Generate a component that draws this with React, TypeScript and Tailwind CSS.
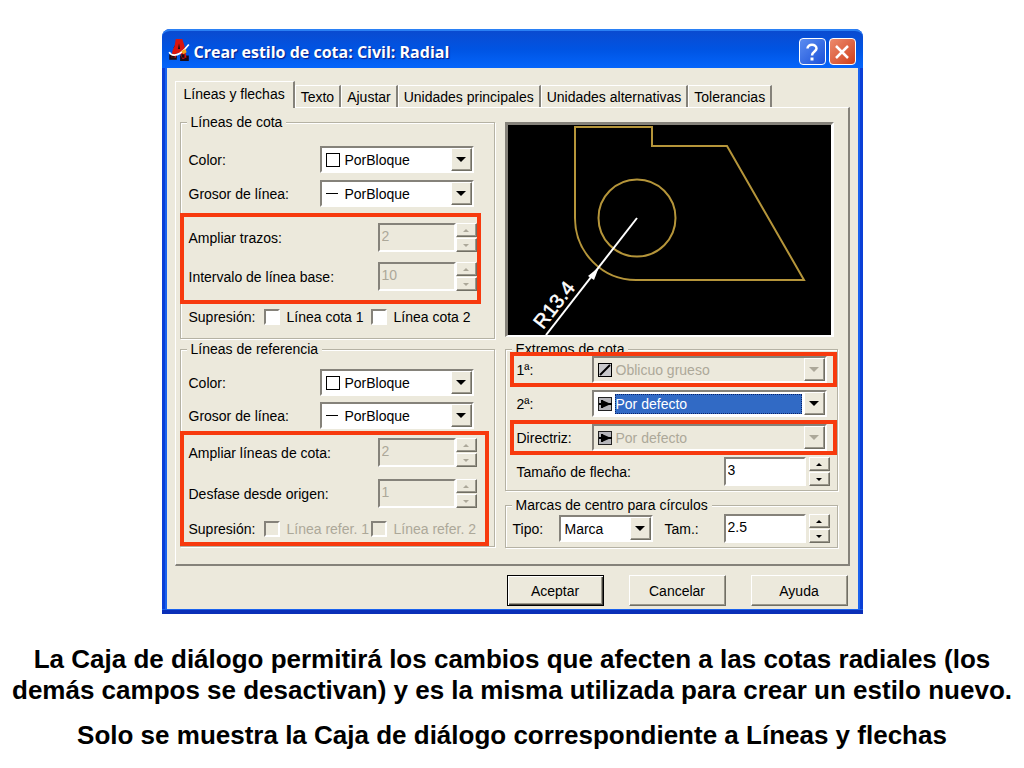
import React, { useState } from "react";
import clsx from "clsx";

const TABS = [
  "Líneas y flechas",
  "Texto",
  "Ajustar",
  "Unidades principales",
  "Unidades alternativas",
  "Tolerancias",
];

// Shared bevels
const sunken =
  "border-2 border-t-[#85827a] border-l-[#85827a] border-r-white border-b-white";
const raised =
  "border border-t-white border-l-white border-r-[#716f64] border-b-[#716f64] shadow-[inset_-1px_-1px_0_#9b988c] bg-[#ece9dc]";

const AppIcon = () => (
  <svg viewBox="0 0 20 22" className="w-[22px] h-6 shrink-0" aria-hidden="true">
    <path d="M1 15h7v5H1zM11 16h8v5h-8zM5 9l4-7 2 3-3 8z" fill="#1a0d16" />
    <path d="M7 1h6l2 6 2 12h-4l-2-5H8l-1 4H3l1-6 2-5z" fill="#d8140f" />
    <path d="M10 5l1 5H9z" fill="#1a0d16" />
    <path d="M12 15h3v3h-2zM3 16h3v2H3zM15 18h3v2h-3z" fill="#1a0d16" />
    <path d="M1 13c2 4 7 3 10 1s5-4 8-8" fill="none" stroke="#fff" strokeWidth="1.5" />
    <path d="M12 12l4-2 1 3-3 2z" fill="#f4a51c" />
  </svg>
);

const ColorIcon = () => <span className="w-[14px] h-[14px] mr-px shrink-0 border border-black bg-white" />;

const LineIcon = () => <span className="w-3 h-px mr-[3px] shrink-0 bg-black" />;

const ObliqueIcon = () => (
  <svg viewBox="0 0 14 14" className="w-[14px] h-[14px] shrink-0" aria-hidden="true">
    <rect x="0.5" y="0.5" width="13" height="13" fill="#c9c9cb" stroke="#000" />
    <path d="M2 12L12 2" stroke="#000" strokeWidth="2" />
  </svg>
);

const ArrowIcon = () => (
  <svg viewBox="0 0 14 14" className="w-[14px] h-[14px] shrink-0" aria-hidden="true">
    <rect x="0.5" y="0.5" width="13" height="13" fill="#b5b5ba" stroke="#222" />
    <path d="M1 7h13M4 3v8" stroke="#000" strokeWidth="2" />
    <path d="M4 3l9 4-9 4z" fill="#000" />
  </svg>
);

interface ComboProps {
  id: string;
  value: string;
  icon?: React.ReactNode;
  disabled?: boolean;
  selected?: boolean;
  className?: string;
}

const Combo: React.FC<ComboProps> = ({ id, value, icon, disabled, selected, className }) => (
  <div className={clsx("flex items-center h-[27px]", sunken, disabled ? "bg-[#ece9dc]" : "bg-white", className)}>
    {icon && <span className="flex items-center pl-1">{icon}</span>}
    <select
      id={id}
      disabled={disabled}
      defaultValue={value}
      className={clsx(
        "appearance-none flex-1 min-w-0 h-[20px] leading-[18px] outline-none disabled:opacity-100 border",
        selected
          ? "ml-[3px] mr-[2px] bg-[#316ac5] text-white border-dotted border-[#0a246a]"
          : "ml-[3px] border-transparent bg-transparent",
        disabled && "text-[#aca899]"
      )}
    >
      <option>{value}</option>
    </select>
    <span className={clsx("flex items-center justify-center w-[21px] h-[23px] shrink-0 pointer-events-none", raised)}>
      <span
        className={clsx(
          "border-x-[5px] border-t-[5px] border-x-transparent",
          disabled ? "border-t-[#aca899]" : "border-t-black"
        )}
      />
    </span>
  </div>
);

interface SpinnerProps {
  id: string;
  value: string;
  disabled?: boolean;
  className?: string;
}

const Spinner: React.FC<SpinnerProps> = ({ id, value, disabled, className }) => {
  const arrow = disabled ? "text-[#aca899]" : "text-black";
  const btn = clsx("flex items-center justify-center w-[21px] h-[14px]", raised, arrow);
  return (
    <div className={clsx("flex h-[29px]", className)}>
      <input
        id={id}
        type="text"
        defaultValue={value}
        disabled={disabled}
        className={clsx(
          "flex-1 min-w-0 h-full pl-[2px] pb-1 outline-none",
          sunken,
          disabled ? "bg-[#ece9dc] text-[#aca899]" : "bg-white"
        )}
      />
      <div className="flex flex-col justify-between">
        <button type="button" disabled={disabled} aria-label="Aumentar" className={btn}>
          <span className="border-x-[3px] border-b-[3px] border-x-transparent border-b-current" />
        </button>
        <button type="button" disabled={disabled} aria-label="Disminuir" className={btn}>
          <span className="border-x-[3px] border-t-[3px] border-x-transparent border-t-current" />
        </button>
      </div>
    </div>
  );
};

const Check: React.FC<{ label: string; disabled?: boolean }> = ({ label, disabled }) => (
  <label className={clsx("flex items-center gap-[7px] whitespace-nowrap", disabled && "text-[#aca899]")}>
    <input
      type="checkbox"
      disabled={disabled}
      className={clsx("appearance-none w-4 h-4 shrink-0", sunken, disabled ? "bg-[#ece9dc]" : "bg-white checked:bg-[#316ac5]")}
    />
    {label}
  </label>
);

interface GroupProps {
  title: string;
  className?: string;
  children: React.ReactNode;
}

const Group: React.FC<GroupProps> = ({ title, className, children }) => (
  <fieldset
    className={clsx(
      "min-w-0 border border-[#b5b2a4] shadow-[1px_1px_0_#fff,inset_1px_1px_0_#fff]",
      className
    )}
  >
    <legend className="ml-[6px] px-1 h-[18px] leading-[18px] bg-[#ece9dc]">{title}</legend>
    {children}
  </fieldset>
);

interface RowProps {
  id: string;
  label: string;
  className?: string;
  children: React.ReactNode;
}

const Row: React.FC<RowProps> = ({ id, label, className, children }) => (
  <div className={clsx("flex items-center", className)}>
    <label htmlFor={id} className="flex-1 whitespace-nowrap">
      {label}
    </label>
    {children}
  </div>
);

const Preview = () => (
  <div className="mt-[9px] mr-1 border-t-3 border-l-3 border-r-3 border-b-2 border-t-[#85827a] border-l-[#85827a] border-r-white border-b-white bg-black">
    <svg viewBox="0 0 323 210" className="block w-full h-[210px]" role="img" aria-label="Vista previa">
      <g fill="none" stroke="#b5953a" strokeWidth="2">
        <path d="M67 2H144V21H219L296 155H128A61 62 0 0 1 67 93Z" />
        <circle cx="129" cy="93" r="38.5" />
      </g>
      <path d="M129 93L38 210" stroke="#fff" strokeWidth="2" />
      <path d="M91 142L86 155L80 151Z" fill="#fff" />
      <text
        transform="translate(35 205) rotate(-52)"
        fill="#fff"
        stroke="#fff"
        strokeWidth="0.5"
        fontSize="20"
        fontFamily="Liberation Sans, sans-serif"
      >
        R13.4
      </text>
    </svg>
  </div>
);

const TitleBar = () => (
  <header className="flex items-center h-[39px] pl-[6px] pr-[7px] rounded-t-lg bg-linear-to-b from-[#0a4bd0] via-[#0054e3] to-[#0565fb] border-t-2 border-[#2a80f5]">
    <AppIcon />
    <h1 className="flex-1 ml-1 pt-1 text-[16px] font-bold text-white font-['Open_Sans',sans-serif] [text-shadow:1px_1px_1px_#0a1883]">
      Crear estilo de cota: Civil: Radial
    </h1>
    <div className="flex gap-[3px] pt-1">
      <button
        type="button"
        aria-label="Ayuda contextual"
        className="flex items-center justify-center w-[27px] h-[27px] rounded-sm border border-white bg-linear-to-br from-[#5b8cf0] to-[#1b4fd8]"
      >
        <svg viewBox="0 0 20 20" className="w-5 h-5" aria-hidden="true">
          <path d="M5.500 6.500C5.500 1.500 14.500 1.500 14.500 6.500C14.500 9.500 10 9.500 10 13.500" fill="none" stroke="#fff" strokeWidth="2.500" />
          <path d="M8.500 15.500h3v3h-3z" fill="#fff" />
        </svg>
      </button>
      <button
        type="button"
        aria-label="Cerrar"
        className="flex items-center justify-center w-[27px] h-[27px] rounded-sm border border-white bg-linear-to-br from-[#ec8a6c] to-[#cf3d14]"
      >
        <svg viewBox="0 0 20 20" className="w-5 h-5" aria-hidden="true">
          <path d="M4 4L16 16M16 4L4 16" stroke="#fff" strokeWidth="2.500" />
        </svg>
      </button>
    </div>
  </header>
);

const LeftColumn = () => (
  <div>
    <Group title="Líneas de cota" className="pb-[13px]">
      <div className="flex flex-col gap-[7px] pt-[15px] pl-2 pr-5">
        <Row id="color-cota" label="Color:">
          <Combo id="color-cota" value="PorBloque" icon={<ColorIcon />} className="w-[154px]" />
        </Row>
        <Row id="grosor-cota" label="Grosor de línea:">
          <Combo id="grosor-cota" value="PorBloque" icon={<LineIcon />} className="w-[154px]" />
        </Row>
      </div>
      <div className="flex flex-col gap-[10px] mt-[6px] -ml-px mr-[13px] border-4 border-[#f73a0e] pt-[6px] pb-[9px] pl-[5px]">
        <Row id="trazos" label="Ampliar trazos:">
          <Spinner id="trazos" value="2" disabled className="w-[99px]" />
        </Row>
        <Row id="intervalo" label="Intervalo de línea base:">
          <Spinner id="intervalo" value="10" disabled className="w-[99px]" />
        </Row>
      </div>
      <div className="grid grid-cols-[75px_107px_auto] items-center h-[17px] mt-1 pl-2">
        <span>Supresión:</span>
        <Check label="Línea cota 1" />
        <Check label="Línea cota 2" />
      </div>
    </Group>

    <Group title="Líneas de referencia" className="mt-px">
      <div className="flex flex-col gap-[6px] pt-[11px] pl-2 pr-5">
        <Row id="color-ref" label="Color:">
          <Combo id="color-ref" value="PorBloque" icon={<ColorIcon />} className="w-[154px]" />
        </Row>
        <Row id="grosor-ref" label="Grosor de línea:">
          <Combo id="grosor-ref" value="PorBloque" icon={<LineIcon />} className="w-[154px]" />
        </Row>
      </div>
      <div className="flex flex-col gap-3 mt-[2px] -ml-px mr-[5px] border-4 border-[#f73a0e] pt-[3px] pb-[5px] pl-[5px]">
        <Row id="ampliar" label="Ampliar líneas de cota:" className="pr-2">
          <Spinner id="ampliar" value="2" disabled className="w-[99px]" />
        </Row>
        <Row id="desfase" label="Desfase desde origen:" className="pr-2">
          <Spinner id="desfase" value="1" disabled className="w-[99px]" />
        </Row>
        <div className="grid grid-cols-[75px_107px_auto] items-center h-[17px]">
          <span>Supresión:</span>
          <Check label="Línea refer. 1" disabled />
          <Check label="Línea refer. 2" disabled />
        </div>
      </div>
    </Group>
  </div>
);

const RightColumn = () => (
  <div>
    <Preview />
    <Group title="Extremos de cota" className="mt-[3px] pb-1">
      <Row
        id="extremo-1"
        label="1ª:"
        className="relative -mt-[6px] ml-1 border-4 border-[#f73a0e] pl-[3px] pr-[6px]"
      >
        <Combo id="extremo-1" value="Oblicuo grueso" icon={<ObliqueIcon />} disabled className="w-[235px]" />
      </Row>
      <Row id="extremo-2" label="2ª:" className="my-[3px] pl-[11px] pr-[10px]">
        <Combo id="extremo-2" value="Por defecto" icon={<ArrowIcon />} selected className="w-[235px]" />
      </Row>
      <Row id="directriz" label="Directriz:" className="ml-1 border-4 border-[#f73a0e] pl-[3px] pr-[6px]">
        <Combo id="directriz" value="Por defecto" icon={<ArrowIcon />} disabled className="w-[235px]" />
      </Row>
      <Row id="flecha" label="Tamaño de flecha:" className="mt-[2px] pl-[11px] pr-[7px]">
        <Spinner id="flecha" value="3" className="w-[106px] gap-[3px]" />
      </Row>
    </Group>
    <Group title="Marcas de centro para círculos" className="mt-[5px] pb-1">
      <div className="flex items-center pl-[7px] pr-[7px]">
        <label htmlFor="tipo" className="w-[46px]">
          Tipo:
        </label>
        <Combo id="tipo" value="Marca" className="w-[94px]" />
        <label htmlFor="tam" className="flex-1 ml-3">
          Tam.:
        </label>
        <Spinner id="tam" value="2.5" className="w-[106px] gap-[3px]" />
      </div>
    </Group>
  </div>
);

export default function App() {
  const [tab, setTab] = useState(TABS[0]);

  return (
    <main className="min-h-screen bg-white pt-[29px] pb-4 text-black font-['Liberation_Sans',Arial,sans-serif]">
      <section className="w-full max-w-[701px] mx-auto rounded-t-lg bg-[#0a3fd6] text-[14px] leading-[18px]">
        <TitleBar />
        <div className="mx-[3px] border-x-2 border-[#1a62ee] bg-[#ece9dc] px-2 pt-[13px] pb-[3px]">
          <div role="tablist" className="flex items-end">
            {TABS.map((name) => (
              <button
                key={name}
                type="button"
                role="tab"
                aria-selected={name === tab}
                onClick={() => setTab(name)}
                className={clsx(
                  "border-t border-l border-r-2 border-t-white border-l-white border-r-[#85827a] whitespace-nowrap",
                  name === tab
                    ? "relative h-[27px] -mb-px px-2 pb-[2px] bg-[#ece9dc]"
                    : "h-[22px] px-[5px]"
                )}
              >
                {name}
              </button>
            ))}
          </div>
          <div
            role="tabpanel"
            className="grid grid-cols-[315fr_333fr] gap-[10px] border-t border-l border-r-2 border-b-2 border-t-white border-l-white border-r-[#85827a] border-b-[#85827a] pt-[5px] pb-4 pl-1 pr-[10px]"
          >
            <LeftColumn />
            <RightColumn />
          </div>
          <div className="flex justify-end gap-[25px] pt-[9px] pr-[2px]">
            <button
              type="button"
              className="w-[97px] h-[31px] border border-black bg-[#ece9dc] shadow-[inset_1px_1px_0_#fff,inset_-1px_-1px_0_#45433c,inset_-2px_-2px_0_#9b988c]"
            >
              Aceptar
            </button>
            <button type="button" className={clsx("w-[97px] h-[31px]", raised)}>
              Cancelar
            </button>
            <button type="button" className={clsx("w-[97px] h-[31px]", raised)}>
              Ayuda
            </button>
          </div>
        </div>
        <div className="h-[5px] border-t border-[#1a62ee] bg-[#0a2fb8]" />
      </section>

      <div className="flex flex-col gap-[14px] mt-[30px] px-2 text-center text-[26px] leading-[31px] font-bold">
        <p>
          La Caja de diálogo permitirá los cambios que afecten a las cotas radiales (los demás campos se
          desactivan) y es la misma utilizada para crear un estilo nuevo.
        </p>
        <p>Solo se muestra la Caja de diálogo correspondiente a Líneas y flechas</p>
      </div>
    </main>
  );
}
